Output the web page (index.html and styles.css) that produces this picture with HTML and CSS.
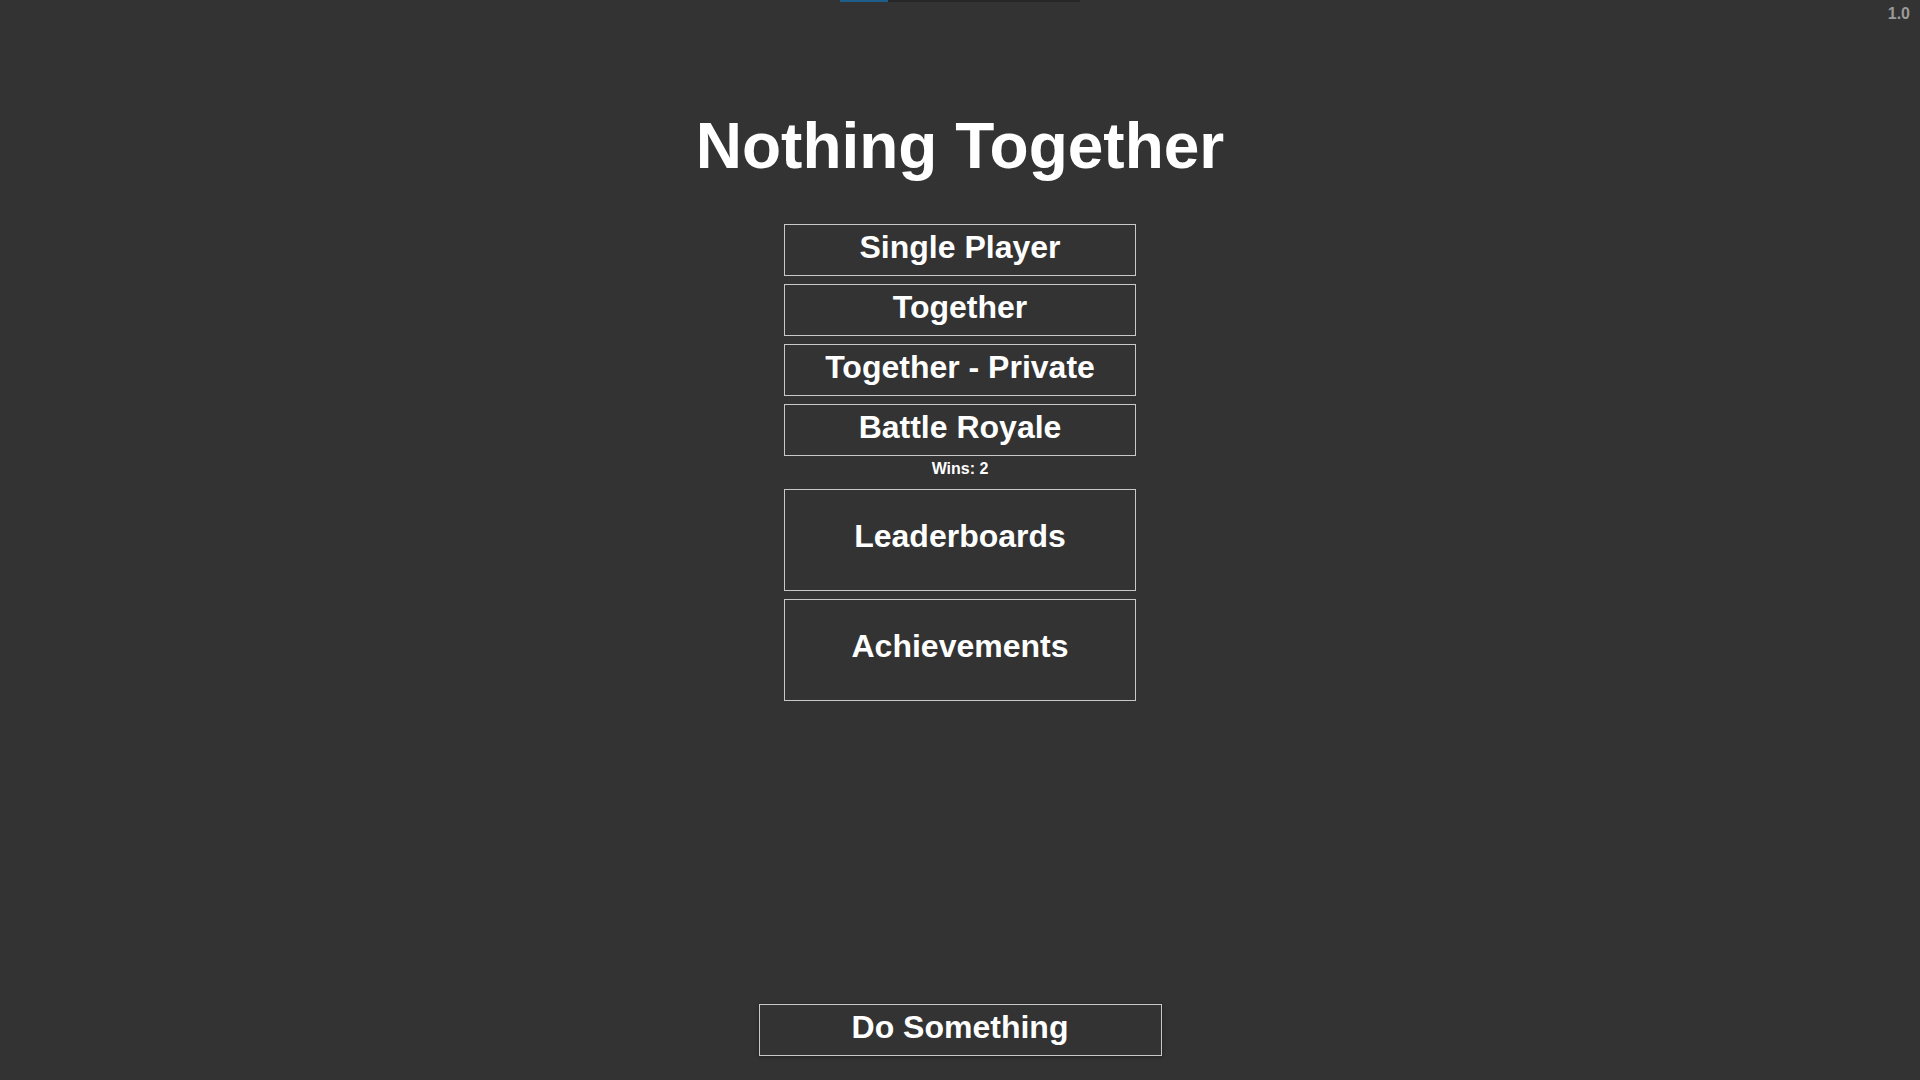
FILE: index.html
```html
<!DOCTYPE html>
<html lang="en">
<head>
    <meta charset="UTF-8">
    <meta name="viewport" content="width=device-width, initial-scale=1.0">
    <title>Nothing Together</title>
    <link rel="stylesheet" href="styles.css">
</head>
<body>
    <header class="top-bar">
        <div class="load-track">
            <div class="load-fill" style="width: 20%"></div>
        </div>
        <span class="version">1.0</span>
    </header>

    <main class="menu">
        <h1 class="title">Nothing Together</h1>

        <div class="menu-list">
            <button class="menu-btn">Single Player</button>
            <button class="menu-btn">Together</button>
            <button class="menu-btn">Together - Private</button>
            <div class="mode-group">
                <button class="menu-btn">Battle Royale</button>
                <div class="wins">Wins: 2</div>
            </div>
            <button class="menu-btn menu-btn-tall">Leaderboards</button>
            <button class="menu-btn menu-btn-tall">Achievements</button>
        </div>
    </main>

    <footer class="footer">
        <button class="menu-btn do-btn">Do Something</button>
    </footer>
</body>
</html>
```

FILE: styles.css
```css
:root {
    --bg: #333333;
    --text: #ffffff;
    --line: #c8c8c8;
    --muted: #9a9a9a;
    --load: #1d5e8a;
}

* {
    margin: 0;
    padding: 0;
    box-sizing: border-box;
    font-family: 'Liberation Sans', Arial, Helvetica, sans-serif;
}

body {
    min-height: 100vh;
    display: flex;
    flex-direction: column;
    background-color: var(--bg);
    color: var(--text);
}

.top-bar {
    display: grid;
    grid-template-columns: 1fr 240px 1fr;
    align-items: start;
}

.load-track {
    grid-column: 2;
    height: 2px;
    background-color: #262626;
}

.load-fill {
    height: 100%;
    background-color: var(--load);
}

.version {
    grid-column: 3;
    justify-self: end;
    padding: 5px 10px 0 0;
    font-size: 16px;
    font-weight: bold;
    color: var(--muted);
}

.menu {
    display: flex;
    flex-direction: column;
    align-items: center;
}

.title {
    margin-top: 86px;
    margin-bottom: 41px;
    font-size: 64px;
    font-weight: bold;
    line-height: normal;
}

.menu-list {
    display: flex;
    flex-direction: column;
    gap: 8px;
    width: 352px;
}

.menu-btn {
    display: block;
    width: 100%;
    padding: 4px 0 9px;
    border: 1px solid var(--line);
    background: transparent;
    color: var(--text);
    font-size: 32px;
    font-weight: bold;
    line-height: 37px;
    text-align: center;
    cursor: pointer;
}

.menu-btn:hover {
    background-color: #3d3d3d;
}

.menu-btn-tall {
    padding: 28px 0 35px;
}

.wins {
    padding-top: 1px;
    font-size: 16px;
    font-weight: bold;
    line-height: 24px;
    text-align: center;
}

.footer {
    margin-top: auto;
    display: flex;
    justify-content: center;
    padding-bottom: 24px;
}

.do-btn {
    width: 403px;
    box-shadow: 0 1px 4px rgba(0,0,0,0.35);
}
```
